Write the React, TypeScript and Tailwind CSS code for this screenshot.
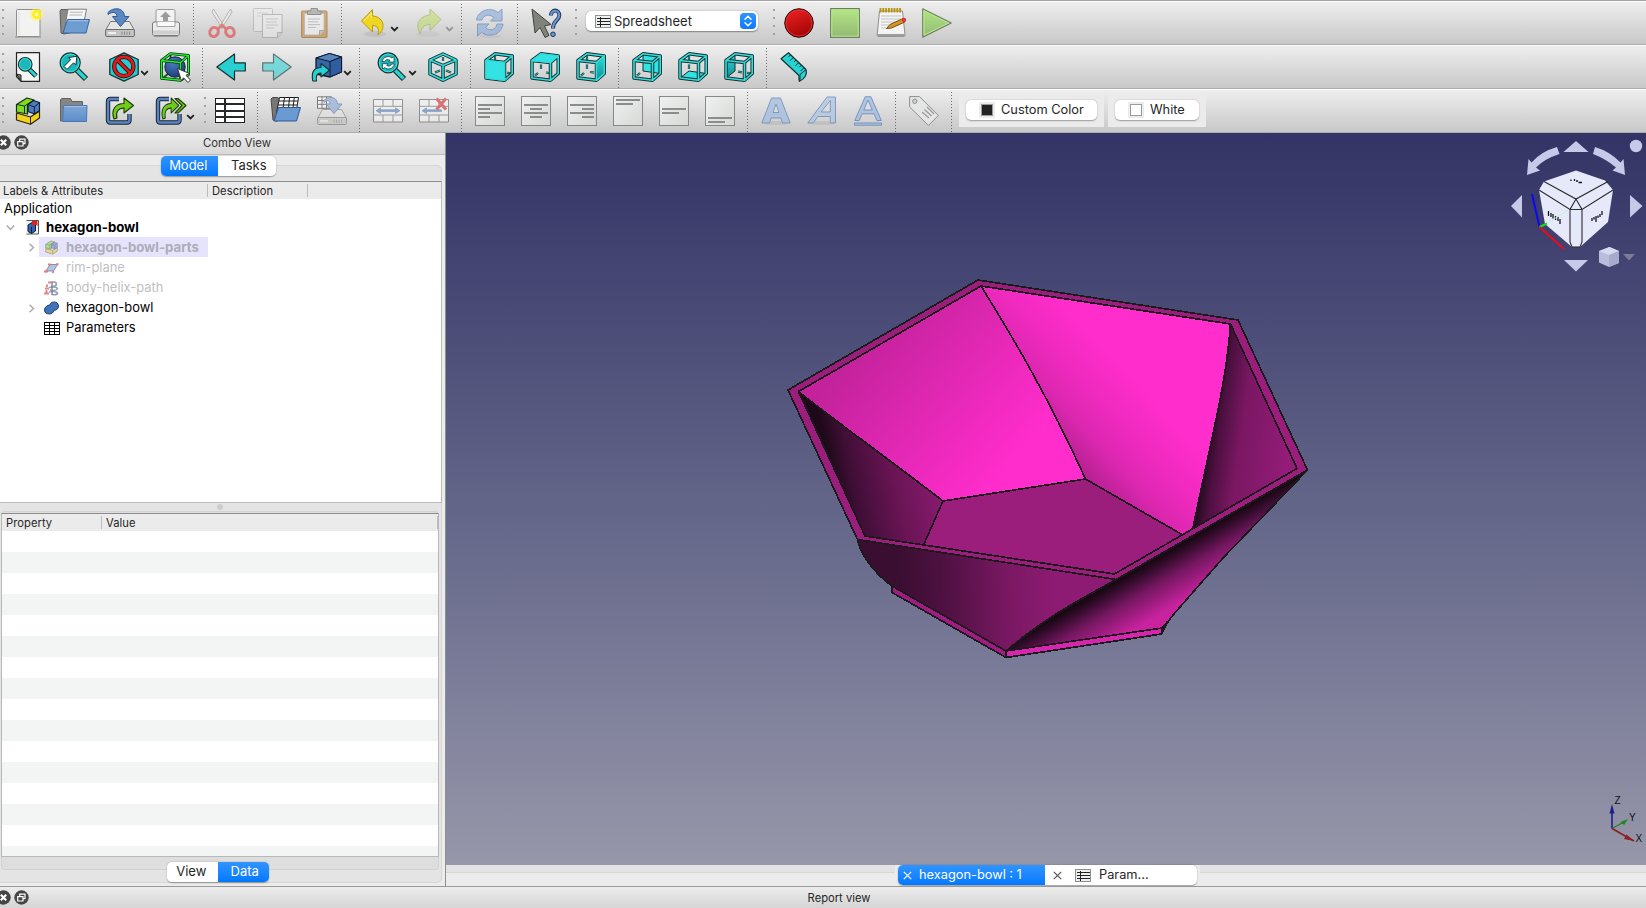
import React from "react";
import type { ReactNode } from "react";

const INK = "#16302f";
const NAVY = "#1c2430";

function Svg({ children, dim, className = "" }: { children: ReactNode; dim?: number; className?: string }) {
  return (
    <svg width="30" height="30" viewBox="0 0 30 30" className={"shrink-0 overflow-visible " + className} opacity={dim ?? 1} strokeLinejoin="round">
      {children}
    </svg>
  );
}

function Chevron({ dim }: { dim?: number }) {
  return (
    <svg width="9" height="6" viewBox="0 0 9 6" className="mt-[18px] shrink-0" opacity={dim ?? 1}>
      <path d="M1.2 1.2 L4.5 4.4 L7.8 1.2" fill="none" stroke="#1e1e1e" strokeWidth="1.8" />
    </svg>
  );
}

function Tool({ children }: { children: ReactNode }) {
  return <div className="flex w-[46px] shrink-0 px-2">{children}</div>;
}

function MenuTool({ children, dim }: { children: ReactNode; dim?: number }) {
  return (
    <div className="flex w-[55px] shrink-0 gap-[1px] pl-3">
      {children}
      <Chevron dim={dim} />
    </div>
  );
}

function Sep() {
  return (
    <div className="flex h-full w-[10px] shrink-0 justify-center pr-[1px]">
      <div className="-mt-[4px] h-[40px] w-px bg-[repeating-linear-gradient(to_bottom,#6c6c6c_0px,#6c6c6c_1px,transparent_1px,transparent_3px)]" />
    </div>
  );
}

function Handle({ className }: { className: string }) {
  return (
    <div className={"flex shrink-0 flex-col items-end gap-[6px] pt-[1px] pr-[1px] " + className}>
      <i className="h-[2px] w-[2px] bg-[#a2a2a2]" />
      <i className="h-[2px] w-[2px] bg-[#a2a2a2]" />
      <i className="h-[2px] w-[2px] bg-[#a2a2a2]" />
      <i className="h-[2px] w-[2px] bg-[#a2a2a2]" />
    </div>
  );
}

function Bar({ children }: { children: ReactNode }) {
  return (
    <div className="flex h-[44px] shrink-0 items-start border-t border-b border-t-white border-b-[#adadad] bg-linear-to-b from-[#eeeeee] to-[#c8c8c8] pt-[6px]">
      {children}
    </div>
  );
}

/* ---------- file and edit icons ---------- */

const NewIcon = () => (
  <Svg>
    <path d="M2 29 H28" stroke="#999" strokeWidth="1.2" />
    <rect x="3.5" y="1.5" width="23.5" height="27" rx="1" fill="#f2f2f1" stroke="#8d8d8b" />
    <path d="M6 4 V27" stroke="#dcdcdc" />
    <circle cx="23.5" cy="6.5" r="6.6" fill="#fff65a" opacity=".55" />
    <circle cx="23.5" cy="6.5" r="4.4" fill="#ffee1c" />
    <circle cx="23.5" cy="6.5" r="1.8" fill="#fffbc0" />
  </Svg>
);
const FolderIcon = () => (
  <Svg>
    <path d="M2 25 L1 3 L2 1.5 H10 L11 4 H24 V22 L5 26 Z" fill="#8a8a88" stroke="#5c5c5a" />
    <path d="M6 18 L9 1.2 H27.5 L25 14 Z" fill="#f6f6f6" stroke="#7d7d7d" />
    <path d="M11 4.2 H24 M10.5 7 H23" stroke="#b5b5b5" />
    <path d="M8.5 11.5 H30.5 L27 25 H4 Z" fill="#6e9dd2" stroke="#3565a3" />
    <path d="M9.5 12.7 H29" stroke="#a6c5e8" />
  </Svg>
);
const DriveBase = () => (
  <>
    <path d="M5.5 13.5 H24.5 L29.5 22.5 H.5 Z" fill="#e6e6e4" stroke="#777" />
    <rect x=".6" y="21.5" width="28.8" height="7" rx="1.2" fill="#c4c4c2" stroke="#6c6c6a" />
    <path d="M3 25 H11" stroke="#eee" strokeWidth="2" />
    <path d="M17 23.5 V27 M19.5 23.5 V27 M22 23.5 V27 M24.5 23.5 V27" stroke="#8b8b8b" />
  </>
);
const SaveArrow = () => (
  <path d="M3 4.5 C8 -1 19 -1 19.5 8.5 H24 L15.5 18.5 L7.5 8.5 H12 C12 4.5 8 2.8 3 6.5 Z" fill="#5b88c0" stroke="#2f5a98" />
);
const SaveIcon = () => (
  <Svg>
    <DriveBase />
    <SaveArrow />
  </Svg>
);
const PrintIcon = () => (
  <Svg>
    <path d="M5 16 V3 Q5 1.5 6.5 1.5 H22.5 Q24 1.5 24 3 V16" fill="#f3f3f3" stroke="#9a9a9a" />
    <path d="M14.5 3.5 L20 9 H17 V13 H12 V9 H9 Z" fill="#9c9c9c" />
    <rect x="1.5" y="14" width="27" height="13.5" rx="2" fill="#ececec" stroke="#7c7c7c" />
    <path d="M6 14 V18.5 H24 V14" fill="#fafafa" stroke="#a5a5a5" />
    <path d="M2 22.5 H28 V26.5 H2 Z" fill="#cfcfcf" />
    <path d="M3 28.5 H27" stroke="#9b9b9b" />
  </Svg>
);
const CutIcon = () => (
  <Svg dim={0.62}>
    <path d="M6.5 1 L17.5 19 L15 20 L5 4 Z M23.5 1 L12.5 19 L15 20 L25 4 Z" fill="#f0f0ef" stroke="#8e8e8c" strokeWidth=".9" />
    <ellipse cx="7" cy="24" rx="4.2" ry="4.6" fill="none" stroke="#e04545" strokeWidth="3" transform="rotate(30 7 24)" />
    <ellipse cx="23" cy="24" rx="4.2" ry="4.6" fill="none" stroke="#e04545" strokeWidth="3" transform="rotate(-30 23 24)" />
    <path d="M11 21 L15 17 L19 21" fill="none" stroke="#e04545" strokeWidth="2.5" />
  </Svg>
);
const CopyIcon = () => (
  <Svg dim={0.45}>
    <rect x=".5" y=".5" width="19" height="23" rx="1" fill="#eee" stroke="#999" />
    <path d="M4 5 H15 M4 8 H15" stroke="#bbb" />
    <path d="M9.5 6.5 H29 V25 L25 29.5 H9.5 Z" fill="#f4f4f4" stroke="#888" />
    <path d="M13 11 H25 M13 14 H24 M13 17 H25 M13 20 H21" stroke="#aaa" />
    <path d="M29 24.5 H24.5 V29" fill="#ccc" stroke="#888" />
  </Svg>
);
const PasteIcon = () => (
  <Svg dim={0.62}>
    <rect x="2.5" y="3" width="25.5" height="26.5" rx="1" fill="#c58a3a" stroke="#8f6224" />
    <path d="M5.5 5.5 H25 V23 L20.5 27 H5.5 Z" fill="#f4f4f3" stroke="#a99" strokeWidth=".7" />
    <path d="M9 11 H21 M9 13.8 H19 M9 16.6 H21 M9 19.4 H17" stroke="#aaa" />
    <path d="M25 22.5 H20.5 V27" fill="#bbb" stroke="#888" />
    <path d="M8.5 6.5 V3 H12 V.5 H18.5 V3 H22 V6.5 Z" fill="#9d9d9a" stroke="#5f5f5c" />
  </Svg>
);
const UndoIcon = () => (
  <Svg>
    <ellipse cx="16" cy="26" rx="11" ry="3" fill="#999" opacity=".28" />
    <path d="M2.5 13 L13.5 1.5 V8 C23.5 8.5 28.5 19 19 27 C20.5 20.5 18.5 17.5 13.5 17.5 V24 Z" fill="#efd623" stroke="#bd9a07" />
    <path d="M5 13 L12.3 5 V9.5" fill="none" stroke="#fbf095" />
  </Svg>
);
const RedoIcon = () => (
  <Svg dim={0.42}>
    <ellipse cx="14" cy="26" rx="11" ry="3" fill="#999" opacity=".3" />
    <path d="M27 11.5 L16 1 V7 C5 8 .5 17 6.5 26 C7 20 10 16.5 16 16.5 V22.5 Z" fill="#b5dc40" stroke="#769a17" />
  </Svg>
);
const RefreshIcon = () => (
  <Svg dim={0.6}>
    <ellipse cx="15" cy="28" rx="11" ry="2" fill="#999" opacity=".3" />
    <path d="M1.5 12 C3 2 16 -1.5 23 4.5 L27 1 V13 H15.5 L19 9.5 C14 5.5 8.5 7 7 12 Z" fill="#86aadc" stroke="#4f78b3" />
    <path d="M28 16 C26.5 27 13.5 30 6.5 24.5 L2.5 28 V16 H14 L10.5 19.5 C15 23.5 21 22 22 16 Z" fill="#86aadc" stroke="#4f78b3" />
  </Svg>
);
const WhatsThisIcon = () => (
  <Svg>
    <path d="M1 1 L4 25 L9 19.5 L14 29.5 L18 27.5 L13.5 18 L20 16.5 Z" fill="#7f837c" stroke="#40443e" />
    <path d="M20 7.5 C20 .8 28.300 1 28.300 7.5 C28.300 12.5 22 12 22 20.5" fill="none" stroke="#203a5e" strokeWidth="4" />
    <path d="M20.200 7.2 C20 1.3 28.200 1.2 28.200 7.5 C28.200 12.3 22 12 22 20" fill="none" stroke="#6b95cc" strokeWidth="2.2" />
    <circle cx="22" cy="26.3" r="2.3" fill="#6b95cc" stroke="#203a5e" />
  </Svg>
);
const RecordIcon = () => (
  <Svg>
    <circle cx="15" cy="15" r="14.3" fill="url(#rec)" stroke="#1d0d0d" />
    <circle cx="15" cy="15" r="13" fill="none" stroke="#ee3838" strokeWidth=".7" />
  </Svg>
);
const StopIcon = () => (
  <Svg>
    <rect x=".6" y=".6" width="28.8" height="28.8" fill="url(#grn)" stroke="#707b68" strokeWidth="1.1" />
    <rect x="1.8" y="1.8" width="26.4" height="26.4" fill="none" stroke="#b2ec84" />
  </Svg>
);
const EditMacroIcon = () => (
  <Svg>
    <path d="M3.5 3 H26.5 L29 27 Q29 28.5 27 28.5 H3 Q1 28.5 1.2 27 Z" fill="#f4f4f4" stroke="#8e8e8c" />
    <path d="M1.5 26 H28.5 V28.5 H1.5 Z" fill="#9d9d9b" />
    <path d="M5 8 H25 M5 11 H25 M5 14 H20 M5 17 H23 M5 20 H14" stroke="#c3c3c3" />
    <path d="M4.5 0 V4.5 M7.3 0 V4.5 M10.1 0 V4.5 M12.9 0 V4.5 M15.7 0 V4.5 M18.5 0 V4.5 M21.3 0 V4.5 M24.1 0 V4.5" stroke="#b5930c" strokeWidth="1.8" />
    <path d="M10.5 20.5 L14 16.5 L27 10.5 L28.8 14 L15.5 20 Z" fill="#d79426" stroke="#7b4f0d" />
    <circle cx="28" cy="12" r="2.2" fill="#e63333" />
  </Svg>
);
const PlayIcon = () => (
  <Svg>
    <path d="M.7 .7 L29.3 15 L.7 29.3 Z" fill="url(#grn)" stroke="#707b68" strokeWidth="1.1" />
    <path d="M2 2.8 L26.6 15 L2 27.2 Z" fill="none" stroke="#b2ec84" />
  </Svg>
);

/* ---------- view icons ---------- */

const Lens = () => (
  <>
    <path d="M18 18 L27 27" stroke={INK} strokeWidth="6" />
    <path d="M18 18 L26.5 26.5" stroke="#2bd3d3" strokeWidth="3.6" />
    <circle cx="11.2" cy="10.8" r="10" fill="#1cb7bb" stroke={INK} strokeWidth="1.2" />
    <circle cx="11.2" cy="10.8" r="8.8" fill="none" stroke="#3be2e2" strokeWidth="1" />
  </>
);
const FitAllIcon = () => (
  <Svg>
    <path d="M3.5 .6 H26.5 V29.4 H8 L3.5 24.5 Z" fill="#f4f4f3" stroke="#262626" strokeWidth="1.2" />
    <path d="M3.5 22 L8 23 V29 Z" fill="#777" stroke="#262626" />
    <path d="M16 17 L23 24" stroke={INK} strokeWidth="5" />
    <path d="M16 17 L22.8 23.8" stroke="#2bd3d3" strokeWidth="2.8" />
    <circle cx="12.2" cy="12.3" r="6.8" fill="#1fb6ba" stroke={INK} strokeWidth="1.2" />
    <circle cx="12.2" cy="12.3" r="5.7" fill="none" stroke="#3be2e2" />
  </Svg>
);
const FitSelIcon = () => (
  <Svg>
    <Lens />
    <path d="M18 4.2 L16.8 13 L14.6 10.8 L8 17.4 L5 14.4 L11.6 7.8 L9.4 5.6 Z" fill="#fff" stroke={INK} />
  </Svg>
);
const DrawStyleIcon = () => (
  <Svg>
    <path d="M15 .8 L29.2 7.5 V22.5 L15 29.2 L.8 22.5 V7.5 Z" fill="#1fcfd1" stroke={INK} strokeWidth="1.3" />
    <circle cx="14.8" cy="14.5" r="9.6" fill="none" stroke="#3a0505" strokeWidth="4.2" />
    <path d="M8 7.7 L21.6 21.3" stroke="#3a0505" strokeWidth="4.2" />
    <circle cx="14.8" cy="14.5" r="9.6" fill="none" stroke="#e01b1b" strokeWidth="2.6" />
    <path d="M8 7.7 L21.6 21.3" stroke="#e01b1b" strokeWidth="2.6" />
  </Svg>
);
const BOX_EDGES = "M1.5 8.5 L10.5 1.6 L28.5 3.5 V22.5 L20.5 28.3 L1.5 26.2 Z M1.5 8.5 L20.5 10.5 L28.5 3.5 M20.5 10.5 V28.3";
const BoundBoxIcon = () => (
  <Svg>
    <path d="M10.5 2 V20 M10.5 20 L1.5 27 M10.5 20 L28.5 22" stroke="#0e5a14" strokeWidth="2" />
    <circle cx="15" cy="15" r="10.2" fill="url(#ball)" stroke="#14233c" />
    <path d={BOX_EDGES} fill="none" stroke="#0c3310" strokeWidth="2.9" />
    <path d={BOX_EDGES} fill="none" stroke="#1df02c" strokeWidth="1.4" />
    <path d="M17.5 16.5 L29.5 21.5 L26 23.3 L30.5 28 L28 30.5 L23.5 25.8 L21.5 29 Z" fill="#fff" stroke="#333" />
  </Svg>
);
const ARROW = "M.8 15 L18.5 2 V10.8 H29.3 V19 H18.5 V28 Z";
const BackIcon = () => (
  <Svg>
    <path d={ARROW} fill="#28cfd0" stroke={INK} strokeWidth="1.2" />
  </Svg>
);
const ForwardIcon = () => (
  <Svg dim={0.6}>
    <path d={ARROW} fill="#33d6d6" stroke={INK} strokeWidth="1.2" transform="matrix(-1 0 0 1 30 0)" />
  </Svg>
);
const LinkViewIcon = () => (
  <Svg>
    <path d="M4 6 L17.5 1.5 L29.5 5 V20 L18 25 L4 22 Z" fill="#3566a8" stroke="#101c30" strokeWidth="1.3" />
    <path d="M4 6 L18 9.5 L29.5 5 L17.5 1.5 Z" fill="#5783bf" stroke="#101c30" />
    <path d="M18 9.5 V25 L29.5 20 V5 Z" fill="#2f5d9f" stroke="#101c30" />
    <path d="M.8 29 C-1 20 2 15.5 9 15.5 V11.5 L17.5 18.3 L9 25 V21 C5 21 3.5 24 4.5 29 Z" fill="#27d0d2" stroke={INK} strokeWidth="1.1" />
  </Svg>
);
const ZoomSyncIcon = () => (
  <Svg>
    <Lens />
    <path d="M5 9.5 C6 4.5 12 3.5 15 6 L17 4.5 V10 H11.5 L13 8.3 C11 7 8.5 7.3 7.8 9.5 Z M17.3 12 C16.5 17 10.5 18 7.5 15.6 L5.5 17 V11.7 H11 L9.5 13.3 C11.5 14.8 14 14.2 14.6 12 Z" fill="#fff" stroke={INK} strokeWidth=".7" />
  </Svg>
);
function Tube({ d, thin }: { d: string; thin?: boolean }) {
  return (
    <>
      <path d={d} fill="none" stroke={INK} strokeWidth={thin ? 2.2 : 3.5} />
      <path d={d} fill="none" stroke="#2fdede" strokeWidth={thin ? 0.8 : 1.6} />
    </>
  );
}
const IsoIcon = () => (
  <Svg>
    <Tube thin d="M15 5 V9 M7 20.5 L12 18.5 M23 20.5 L18 18.5" />
    <Tube d="M15 2 L28 8 V22 L15 28.2 L2 22 V8 Z M2 8 L15 13.5 L28 8 M15 13.5 V28" />
  </Svg>
);
type Face = "front" | "top" | "right" | "rear" | "bottom" | "left";
const facePath: Record<Face, string> = {
  front: "M2 8.5 L20.5 10.5 V28.3 L2 26 Z",
  top: "M2 8.5 L20.5 10.5 L28.2 4 L11 1.8 Z",
  right: "M20.5 10.5 L28.2 4 V21.5 L20.5 28.3 Z",
  rear: "M11 2 L28.2 4 V21.5 L11 19 Z",
  bottom: "M2 26 L11 19 L28.2 21.5 L20.5 28.3 Z",
  left: "M2 8.5 L11 2 V19 L2 26 Z",
};
const stubPath: Record<Face, string> = {
  front: "M11 3 V8 M23 20.8 L27 21.3",
  top: "M11 12.5 V17 M5 23.5 L8 21 M16 20.5 L21 21.3",
  right: "M11 4 V8 M11 12.5 V17 M5 23.5 L8 21 M14 20 L18 20.6",
  rear: "M5 23.5 L8 21",
  bottom: "M11 4 V8 M11 12.5 V17",
  left: "M14 19.6 L18 20.3 M23 20.8 L27 21.3",
};
function CubeIcon({ face }: { face: Face }) {
  const near = face === "front" || face === "top" || face === "right";
  const fill = face === "right" || face === "left" ? "url(#teal)" : "#33e3e3";
  return (
    <Svg>
      {!near && <path d={facePath[face]} fill={fill} stroke={INK} />}
      <Tube thin d={stubPath[face]} />
      <Tube d="M2 8.5 L11 1.8 L28.2 4 V21.5 L20.5 28.3 L2 26 Z M2 8.5 L20.5 10.5 L28.2 4 M20.5 10.5 V28.3" />
      {near && <path d={facePath[face]} fill={fill} stroke="#2fdcdc" strokeWidth="1.3" />}
    </Svg>
  );
}
const MeasureIcon = () => (
  <Svg>
    <path d="M8.5 .8 L26 17.5 C27 21 26 26 19.5 29.3 C18 27 20 25 18.5 23 L1 6.8 Z" fill="#25d3d5" stroke={INK} strokeWidth="1.2" />
    <path d="M26 17.5 L20 22.5 V29" fill="none" stroke={INK} />
    <path d="M10.6 2.8 L8.6 4.8 M13.3 5.4 L10 8.7 M16 8 L14 10 M18.7 10.6 L15.4 13.9 M21.4 13.2 L19.4 15.2 M24 15.7 L20.7 19" stroke={INK} strokeWidth="1" />
  </Svg>
);

/* ---------- workbench icons ---------- */

const BodyIcon = ({ small }: { small?: boolean }) => (
  <svg width={small ? 15 : 30} height={small ? 15 : 30} viewBox="0 0 30 30" className="shrink-0" strokeLinejoin="round" opacity={small ? 0.5 : 1}>
    <path d="M3.5 17 L17.5 21 L26.5 15 V22 L17.5 28.3 L3.5 24 Z" fill="#f2d21b" stroke="#2b2405" strokeWidth="1.2" />
    <path d="M17.5 21 V28" stroke="#2b2405" />
    <path d="M3.5 8.5 L14 2 L21 4 L14.5 9.5 V18 L3.5 16 Z" fill="#7edc1e" stroke="#17300a" strokeWidth="1.2" />
    <path d="M3.5 8.5 L11.5 10 L21 4 M11.5 10 V17" fill="none" stroke="#17300a" />
    <path d="M15 8.5 L20.5 4.5 L26.5 6.5 V14.5 L21.5 18 L15 15.5 Z" fill="#4b7cc0" stroke="#101c30" strokeWidth="1.2" />
    <path d="M15 8.5 L21.3 11 L26.5 6.5 M21.3 11 V18" fill="none" stroke="#101c30" />
  </svg>
);
const GroupIcon = () => (
  <Svg>
    <path d="M1.5 25 V3.5 L3 2.5 H11.5 L13 5.5 H23.5 V22 Z" fill="#858583" stroke="#626260" />
    <path d="M4.5 9.5 H28 L27.5 25.5 H3.5 Z" fill="url(#fold)" stroke="#4a78b4" />
    <path d="M5.5 10.6 H27" stroke="#a3c2e6" />
  </Svg>
);
const SQUARE = "M14 3 H5.5 Q3 3 3 5.5 V24 Q3 26.5 5.5 26.5 H22 Q24.5 26.5 24.5 24 V18";
const Box = () => (
  <>
    <path d={SQUARE} fill="none" stroke={NAVY} strokeWidth="4.4" />
    <path d={SQUARE} fill="none" stroke="#5585c4" strokeWidth="2.4" />
  </>
);
const GREEN_ARROW = "M9 23 C5.5 13 11 7.5 19 7.5 V2 L28.5 9.5 L19 17 V12 C13 12 10.5 16 12 22 Z";
const LinkIcon = () => (
  <Svg>
    <Box />
    <path d={GREEN_ARROW} fill="#6fcb1c" stroke="#1c3a08" strokeWidth="1.1" />
  </Svg>
);
const MultiLinkIcon = () => (
  <Svg>
    <Box />
    <path d="M20 2.5 H23 L31 9.5 L23 17 H20 L27 9.5 Z" fill="#6fcb1c" stroke="#1c3a08" strokeWidth="1.1" />
    <path d={GREEN_ARROW} fill="#6fcb1c" stroke="#1c3a08" strokeWidth="1.1" transform="translate(.5 0) scale(.82 1)" />
  </Svg>
);
const SheetIcon = () => (
  <Svg>
    <g shapeRendering="crispEdges">
      <rect x=".5" y="2.5" width="29" height="24" fill="#fff" stroke="#1f1f1f" strokeWidth="1" />
      <path d="M0 8.3 H30 M0 14.5 H30 M0 20.5 H30 M10.2 2 V27" stroke="#262a2c" strokeWidth="2" />
    </g>
  </Svg>
);
const ImportIcon = () => (
  <Svg>
    <path d="M2 24 L0 3 L1.5 1.5 H7 L9 4 H24 V22 L5 25 Z" fill="#777775" stroke="#4c4c4a" />
    <path d="M5.5 17 L8.5 1.5 H27.5 L25.5 14 Z" fill="#fff" stroke="#1e1e1e" />
    <path d="M8 5 H27 M7 9 H26 M13.5 1.5 L12 12 M18.5 1.5 L17.5 12 M23.3 1.5 L22 12" stroke="#1e1e1e" />
    <path d="M7.5 11.5 H29.5 L25.5 25 H3 Z" fill="#6a9ad2" stroke="#2d5894" />
  </Svg>
);
const ExportIcon = () => (
  <Svg dim={0.55}>
    <rect x=".5" y=".8" width="14" height="11.5" fill="#fff" stroke="#222" />
    <path d="M.5 4.5 H14 M.5 8.3 H14 M5 .8 V12 M9.5 .8 V12" stroke="#222" />
    <DriveBase />
    <path d="M7 4.5 C11 0 20 0 20.5 8 H25 L17 17.5 L9 8 H13 C13 5 11 3 7 6.5 Z" fill="#7ea1d6" stroke="#3e67a6" />
  </Svg>
);
const MergeGrid = () => (
  <>
    <rect x=".5" y="3.5" width="29" height="22.5" fill="#f6f6f6" stroke="#666" />
    <path d="M0 10.3 H30 M0 19 H30 M10 3.5 V10 M20 3.5 V10 M10 19 V26 M20 19 V26" stroke="#777" />
  </>
);
const MergeIcon = () => (
  <Svg dim={0.65}>
    <MergeGrid />
    <path d="M3 14.7 L7.5 11.8 V13.8 H22.5 V11.8 L27 14.7 L22.5 17.5 V15.6 H7.5 V17.5 Z" fill="#5e8cc8" stroke="#3f6ba8" strokeWidth=".6" />
  </Svg>
);
const SplitIcon = () => (
  <Svg dim={0.65}>
    <MergeGrid />
    <path d="M3 14.7 L7.5 11.8 V13.8 H22.5 V15.6 H7.5 V17.5 Z" fill="#5e8cc8" stroke="#3f6ba8" strokeWidth=".6" />
    <path d="M17.5 2.5 L27 13.500 M27 2.5 L17.5 13.500" stroke="#d63a3a" strokeWidth="3.2" />
  </Svg>
);
function AlignIcon({ d }: { d: string }) {
  return (
    <Svg>
      <rect x=".5" y=".5" width="29" height="29" fill="url(#paper)" stroke="#858988" shapeRendering="crispEdges" />
      <path d={d} stroke="#8a8d8c" strokeWidth="2" shapeRendering="crispEdges" />
    </Svg>
  );
}
const BoldIcon = () => (
  <Svg dim={0.75}>
    <ellipse cx="15" cy="27" rx="13" ry="2" fill="#aaa" opacity=".5" />
    <path d="M.8 27 L10.5 2 H19.5 L29.2 27 H21.5 L19.8 22 H10.2 L8.5 27 Z M12 16.5 H18 L15 8 Z" fill="#a4bde0" stroke="#5f84b8" fillRule="evenodd" />
  </Svg>
);
const ItalicIcon = () => (
  <Svg dim={0.75}>
    <ellipse cx="15" cy="27" rx="13" ry="2" fill="#aaa" opacity=".5" />
    <path d="M.8 27 L20 1 H28.5 V27 H23.3 V20.5 H10.8 L6.2 27 Z M14 16 H23.3 V4.5 Z" fill="#b0c6e4" stroke="#5f84b8" fillRule="evenodd" />
  </Svg>
);
const UnderlineIcon = () => (
  <Svg dim={0.8}>
    <path d="M1.800 24.500 L12.200 .7 H17.900 L28.300 24.500 H23.900 L21 17.800 H9.100 L6.200 24.500 Z M10.800 14 H19.300 L15 4.100 Z" fill="#a4bde0" stroke="#5f84b8" fillRule="evenodd" />
    <rect x="1.5" y="27" width="27" height="2.2" fill="#a9c1e2" stroke="#5f84b8" />
  </Svg>
);
const TagIcon = () => (
  <Svg>
    <path d="M.6 .6 H10.5 L29.4 19.5 L19.5 29.4 L.6 11 Z" fill="#e4e5e4" stroke="#8d9090" />
    <circle cx="5.8" cy="5.3" r="2.2" fill="#cfcfcf" stroke="#8d9090" />
    <path d="M13 16 L20 22 M15.500 13.5 L22.500 20 M18 11 L25 18" stroke="#979a9a" strokeWidth="1.2" fill="none" />
  </Svg>
);

function SmallSheet({ black }: { black?: boolean }) {
  return black ? (
    <svg width="16" height="13" viewBox="0 0 16 13" className="shrink-0" shapeRendering="crispEdges">
      <path d="M.5 .5 H15.5 V12.5 H.5 Z M.5 3.5 H15.5 M.5 6.5 H15.5 M.5 9.5 H15.5 M5.5 .5 V12.5 M10.5 .5 V12.5" fill="#fff" stroke="#000" />
    </svg>
  ) : (
    <svg width="16" height="13" viewBox="0 0 16 13" className="shrink-0" shapeRendering="crispEdges">
      <path d="M.5 .5 H15.5 V12.5 H.5 Z" fill="#eef0ef" stroke="#8c9190" />
      <path d="M1.5 3.5 H14.5 M1.5 6.5 H14.5 M1.5 9.5 H14.5 M5.5 1.5 V11.5" stroke="#222" />
    </svg>
  );
}

function Defs() {
  return (
    <svg width="0" height="0" className="absolute">
      <defs>
        <linearGradient id="rec" x1="0" y1="0" x2=".4" y2="1"><stop stopColor="#f02424" /><stop offset="1" stopColor="#a80606" /></linearGradient>
        <linearGradient id="grn" x1="0" y1="0" x2="0" y2="1"><stop stopColor="#b4e687" /><stop offset="1" stopColor="#93b873" /></linearGradient>
        <linearGradient id="teal" x1="0" y1="0" x2="0" y2="1"><stop stopColor="#2fdada" /><stop offset="1" stopColor="#0f8d92" /></linearGradient>
        <linearGradient id="fold" x1="0" y1="0" x2="0" y2="1"><stop stopColor="#7fa8d8" /><stop offset="1" stopColor="#5b8cca" /></linearGradient>
        <linearGradient id="paper" x1="0" y1="0" x2="1" y2="1"><stop stopColor="#f0f1f0" /><stop offset="1" stopColor="#d6d8d6" /></linearGradient>
        <radialGradient id="ball" cx=".4" cy=".3" r=".8"><stop stopColor="#4c7fc6" /><stop offset="1" stopColor="#17366c" /></radialGradient>
      </defs>
    </svg>
  );
}

function ColorButton({ label, swatch, className }: { label: string; swatch: string; className: string }) {
  return (
    <div className={"-mt-[2px] flex h-[33px] shrink-0 justify-center bg-[#ebebeb] pt-[6px] " + className}>
      <div className="flex h-[20px] w-full items-center rounded-[5px] bg-white pl-[13px] shadow-[0_0.5px_1.5px_rgba(0,0,0,0.35)]">
        <span className="mr-[6px] flex h-[16px] w-[16px] items-center justify-center bg-[#ececec]">
          <i className={"h-[12px] w-[12px] border border-[#9b9b9b] " + swatch} />
        </span>
        <span className="text-[12.8px] leading-none whitespace-nowrap text-[#262626]">{label}</span>
      </div>
    </div>
  );
}

function Toolbars() {
  return (
    <div className="flex shrink-0 flex-col border-t border-[#a3a3a3]">
      <Bar>
        <Handle className="w-[5px]" />
        <Tool><NewIcon /></Tool>
        <Tool><FolderIcon /></Tool>
        <Tool><SaveIcon /></Tool>
        <Tool><PrintIcon /></Tool>
        <Sep />
        <Tool><CutIcon /></Tool>
        <Tool><CopyIcon /></Tool>
        <Tool><PasteIcon /></Tool>
        <Sep />
        <MenuTool><UndoIcon /></MenuTool>
        <MenuTool dim={0.35}><RedoIcon /></MenuTool>
        <Sep />
        <Tool><RefreshIcon /></Tool>
        <Sep />
        <Tool><WhatsThisIcon /></Tool>
        <Handle className="w-[9px]" />
        <div className="mt-[3px] ml-[8px] flex h-[20px] w-[172px] shrink-0 items-center rounded-[5px] bg-white pr-[2px] pl-[9px] shadow-[0_0.5px_1.5px_rgba(0,0,0,0.4)]">
          <SmallSheet />
          <span className="ml-[3px] flex-1 text-[13px] leading-none text-[#262626]">Spreadsheet</span>
          <span className="flex h-[16px] w-[16px] items-center justify-center rounded-[4px] bg-linear-to-b from-[#2f94ff] to-[#0a7aff]">
            <svg width="8" height="12" viewBox="0 0 8 12"><path d="M1 4.3 L4 1.3 L7 4.3 M1 7.7 L4 10.7 L7 7.7" fill="none" stroke="#fff" strokeWidth="1.5" strokeLinecap="round" strokeLinejoin="round" /></svg>
          </span>
        </div>
        <Handle className="w-[18px]" />
        <Tool><RecordIcon /></Tool>
        <Tool><StopIcon /></Tool>
        <Tool><EditMacroIcon /></Tool>
        <Tool><PlayIcon /></Tool>
      </Bar>
      <Bar>
        <Handle className="w-[5px]" />
        <Tool><FitAllIcon /></Tool>
        <Tool><FitSelIcon /></Tool>
        <MenuTool><DrawStyleIcon /></MenuTool>
        <Tool><BoundBoxIcon /></Tool>
        <Sep />
        <Tool><BackIcon /></Tool>
        <Tool><ForwardIcon /></Tool>
        <MenuTool><LinkViewIcon /></MenuTool>
        <Sep />
        <MenuTool><ZoomSyncIcon /></MenuTool>
        <Tool><IsoIcon /></Tool>
        <Sep />
        <Tool><CubeIcon face="front" /></Tool>
        <Tool><CubeIcon face="top" /></Tool>
        <Tool><CubeIcon face="right" /></Tool>
        <Sep />
        <Tool><CubeIcon face="rear" /></Tool>
        <Tool><CubeIcon face="bottom" /></Tool>
        <Tool><CubeIcon face="left" /></Tool>
        <Sep />
        <Tool><MeasureIcon /></Tool>
      </Bar>
      <Bar>
        <Handle className="w-[5px]" />
        <Tool><BodyIcon /></Tool>
        <Tool><GroupIcon /></Tool>
        <Tool><LinkIcon /></Tool>
        <MenuTool><MultiLinkIcon /></MenuTool>
        <Handle className="w-[9px]" />
        <Tool><SheetIcon /></Tool>
        <Sep />
        <Tool><ImportIcon /></Tool>
        <Tool><ExportIcon /></Tool>
        <Sep />
        <Tool><MergeIcon /></Tool>
        <Tool><SplitIcon /></Tool>
        <Sep />
        <Tool><AlignIcon d="M3 9 H27 M3 13 H15 M3 17 H27 M3 21 H15" /></Tool>
        <Tool><AlignIcon d="M3 9 H27 M9 13 H21 M3 17 H27 M9 21 H21" /></Tool>
        <Tool><AlignIcon d="M3 9 H27 M15 13 H27 M3 17 H27 M15 21 H27" /></Tool>
        <Tool><AlignIcon d="M3 4 H27 M3 8 H20" /></Tool>
        <Tool><AlignIcon d="M3 13 H27 M3 17 H20" /></Tool>
        <Tool><AlignIcon d="M3 22 H27 M3 26 H20" /></Tool>
        <Sep />
        <Tool><BoldIcon /></Tool>
        <Tool><ItalicIcon /></Tool>
        <Tool><UnderlineIcon /></Tool>
        <Sep />
        <Tool><TagIcon /></Tool>
        <Sep />
        <ColorButton label="Custom Color" swatch="bg-[#222222]" className="ml-[2px] w-[145px] px-[7px]" />
        <ColorButton label="White" swatch="bg-white" className="ml-[4px] w-[98px] px-[7px]" />
      </Bar>
    </div>
  );
}

function DockButtons() {
  return (
    <div className="-ml-[4px] flex w-[33px] shrink-0 gap-[3px]">
      <svg width="15" height="15" viewBox="0 0 15 15"><circle cx="7.5" cy="7.5" r="7.2" fill="#454545" /><path d="M4.8 4.8 L10.2 10.2 M10.2 4.8 L4.8 10.2" stroke="#fff" strokeWidth="2.2" /></svg>
      <svg width="15" height="15" viewBox="0 0 15 15"><circle cx="7.5" cy="7.5" r="7.2" fill="#454545" /><path d="M5.7 6.2 V4.2 H11 V8.6 H9.3 M3.7 6.6 H9 V11 H3.7 Z" fill="none" stroke="#fff" strokeWidth="1.2" /></svg>
    </div>
  );
}

/* ---------- side panel ---------- */

function TreeArrow({ open }: { open?: boolean }) {
  return (
    <svg width="9" height="9" viewBox="0 0 9 9" className="shrink-0">
      <path d={open ? "M.8 2.5 L4.5 6.5 L8.2 2.5" : "M2.5 .8 L6.5 4.5 L2.5 8.2"} fill="none" stroke="#a6a6a6" strokeWidth="1.3" />
    </svg>
  );
}
const DocIcon = () => (
  <svg width="14" height="15" viewBox="0 0 14 15" className="shrink-0">
    <path d="M.5 .5 H12.5 V14 H.5" fill="#f2f2f2" stroke="#555" />
    <path d="M2 5 L6 2.5 L9.5 4.5 V11 L5.5 13.5 L2 11.5 Z" fill="#2f66ae" stroke="#0f1f3a" />
    <path d="M5.5 7 V13" stroke="#0f1f3a" />
    <path d="M6 1 L11.5 .5 V6 L9.8 4.5 L7.5 6 L6 4.5 Z" fill="#e02020" />
  </svg>
);
const PlaneIcon = () => (
  <svg width="15" height="12" viewBox="0 0 15 12" className="shrink-0" opacity=".7">
    <path d="M2 9 L6 2.500 H13.500 L9.500 9 Z" fill="#8eb0d8" stroke="#4a6286" />
    <path d="M4 2.500 H7 M12 2.500 L14.500 2 M1 10.500 L3 8 M0 9.500 H4 M9.500 9 L8.500 11" stroke="#d84a4a" strokeWidth="1.8" />
  </svg>
);
const HelixIcon = () => (
  <svg width="15" height="15" viewBox="0 0 15 15" className="shrink-0" opacity=".65">
    <path d="M7 1.500 Q12 0 12.500 3 Q12 6 7 5 M5 6.500 Q12 5 13.500 7.500 Q12 10.500 6 9 M5 11 Q12 9.500 13.500 12 Q13 14.500 8 13.500" fill="none" stroke="#5a6f90" strokeWidth="1.6" />
    <path d="M8 .5 V14" stroke="#3d4656" strokeWidth="1.4" />
    <path d="M4 1.500 H7 M3 3.500 V6 M1 7.500 H5 M2.500 9 V12 M0 12.500 H5" stroke="#d84a4a" strokeWidth="2" />
  </svg>
);
const FusionIcon = () => (
  <svg width="15" height="14" viewBox="0 0 15 14" className="shrink-0">
    <path d="M6 4 C6 0 14.5 -.5 14.5 5 C14.5 8 12 9.5 10 9.3 C9.5 14 .5 14.500 .5 9 C.5 6 3.500 4 6 4 Z" fill="#3f72b6" stroke="#1f4277" />
  </svg>
);

function Segments({ left, right, active, shift, className }: { left: string; right: string; active: "left" | "right"; shift: string; className: string }) {
  const on = "bg-linear-to-b from-[#2f94ff] to-[#0078ff] text-white";
  const off = "bg-white text-[#262626]";
  return (
    <div className={"z-10 flex h-[20px] shrink-0 overflow-hidden rounded-[5px] text-[13px] leading-[19px] shadow-[0_0.5px_1.5px_rgba(0,0,0,0.35)] " + className}>
      <span className={"flex-1 pr-[2px] text-center " + (active === "left" ? on : off)}>{left}</span>
      <span className={"flex-1 text-center " + shift + " " + (active === "right" ? on : off)}>{right}</span>
    </div>
  );
}

function Tree() {
  return (
    <div className="flex h-[322px] w-[442px] shrink-0 flex-col border-t border-r border-b border-t-[#8c8c8c] border-r-[#bcbcbc] border-b-[#bcbcbc] bg-white text-[12.9px] text-black">
      <div className="flex h-[17px] shrink-0 items-center bg-[#ebebeb] text-[11.2px] tracking-[0.05px] text-[#262626]">
        <span className="h-[13px] w-[208px] border-r border-[#bdbdbd] pl-[3px] leading-[14px]">Labels &amp; Attributes</span>
        <span className="h-[13px] w-[100px] border-r border-[#bdbdbd] pl-[4px] leading-[14px]">Description</span>
      </div>
      <div className="flex h-[19px] shrink-0 items-center pl-[4px]">Application</div>
      <div className="flex h-[19px] shrink-0 items-center pl-[6px] text-[13.2px] font-bold">
        <TreeArrow open />
        <span className="ml-[11px] flex w-[20px]"><DocIcon /></span>
        hexagon-bowl
      </div>
      <div className="flex h-[20px] shrink-0 items-center pl-[27px]">
        <TreeArrow />
        <div className="ml-[3px] flex h-full w-[169px] items-center bg-[#e6e4fc] pt-[1px] pl-[5px] text-[13.2px] font-bold text-[#acacba]">
          <span className="flex w-[22px]"><BodyIcon small /></span>
          hexagon-bowl-parts
        </div>
      </div>
      <div className="flex h-[20px] shrink-0 items-center pt-[2px] pl-[44px] text-[#bfbfbf]">
        <span className="flex w-[22px]"><PlaneIcon /></span>
        rim-plane
      </div>
      <div className="flex h-[20px] shrink-0 items-center pt-[2px] pl-[44px] text-[#bfbfbf]">
        <span className="flex w-[22px]"><HelixIcon /></span>
        body-helix-path
      </div>
      <div className="flex h-[20px] shrink-0 items-center pt-[2px] pl-[27px]">
        <TreeArrow />
        <span className="ml-[8px] flex w-[22px]"><FusionIcon /></span>
        hexagon-bowl
      </div>
      <div className="flex h-[20px] shrink-0 items-center pt-[2px] pl-[44px]">
        <span className="flex w-[22px]"><SmallSheet black /></span>
        Parameters
      </div>
    </div>
  );
}

function Properties() {
  return (
    <div className="ml-[1px] flex h-[359px] w-[438px] shrink-0 flex-col rounded-[4px] border border-[#d2d2d2] bg-[#dedede] pt-[1px]">
      <div className="-mx-px flex h-[344px] shrink-0 flex-col overflow-hidden border border-[#b8b8b8] border-t-[#8c8c8c] bg-white">
        <div className="flex h-[17px] shrink-0 items-center bg-[#ebebeb] text-[11.2px] tracking-[0.05px] text-[#262626]">
          <span className="h-[13px] w-[100px] border-r border-[#bdbdbd] pl-[4px] leading-[14px]">Property</span>
          <span className="h-[13px] flex-1 border-r border-[#bdbdbd] pl-[4px] leading-[14px]">Value</span>
        </div>
        <div className="flex-1 bg-[repeating-linear-gradient(to_bottom,#ffffff_0px,#ffffff_21px,#f3f5f4_21px,#f3f5f4_42px)]" />
      </div>
    </div>
  );
}

function SidePanel() {
  return (
    <div className="flex w-[446px] shrink-0 flex-col border-r border-[#8f8f93] bg-[#ececec]">
      <div className="flex h-[22px] shrink-0 items-start border-b border-[#bdbdbd] bg-linear-to-b from-[#ececec] to-[#d8d8d8] pt-[2px]">
        <DockButtons />
        <span className="flex-1 pt-[1px] text-center text-[11.3px] leading-[15px] text-[#333333]">Combo View</span>
      </div>
      <div className="mt-[10px] flex h-[718px] w-[442px] flex-col rounded-tr-[5px] rounded-br-[5px] border-t border-b border-[#d6d6d6] bg-[#e4e4e4] shadow-[inset_-1px_0_0_#d6d6d6]">
        <Segments left="Model" right="Tasks" active="left" shift="pl-[4px]" className="-mt-[10px] mb-[5px] ml-[161px] w-[115px]" />
        <Tree />
        <div className="flex h-[8px] shrink-0 items-center justify-center pr-[2px]"><i className="h-[6px] w-[6px] rounded-full bg-[#cdcdcd]" /></div>
        <Properties />
        <Segments left="View" right="Data" active="right" shift="pl-[3px]" className="-mt-[8px] ml-[167px] w-[102px]" />
      </div>
    </div>
  );
}

/* ---------- 3D view ---------- */

function Bowl() {
  return (
    <g>
      <defs>
        <linearGradient id="b1" gradientUnits="userSpaceOnUse" x1="838" y1="374" x2="985" y2="496"><stop stopColor="#c4229c" /><stop offset=".4" stopColor="#dc27b0" /><stop offset=".75" stopColor="#f22ac1" /><stop offset="1" stopColor="#ff2dcc" /></linearGradient>
        <linearGradient id="b2" gradientUnits="userSpaceOnUse" x1="1078" y1="478" x2="1158" y2="405"><stop stopColor="#ae1f8b" /><stop offset=".35" stopColor="#dc27b0" /><stop offset=".65" stopColor="#f02abf" /><stop offset="1" stopColor="#ff2dcc" /></linearGradient>
        <linearGradient id="b3" gradientUnits="userSpaceOnUse" x1="1207" y1="440" x2="1288" y2="452"><stop stopColor="#250a1f" /><stop offset=".14" stopColor="#4c1040" /><stop offset=".4" stopColor="#7a1762" /><stop offset="1" stopColor="#931c78" /></linearGradient>
        <linearGradient id="b4" gradientUnits="userSpaceOnUse" x1="832" y1="482" x2="930" y2="462"><stop stopColor="#1d0918" /><stop offset=".2" stopColor="#3f0e36" /><stop offset=".6" stopColor="#681453" /><stop offset="1" stopColor="#861a6d" /></linearGradient>
        <linearGradient id="b5" gradientUnits="userSpaceOnUse" x1="900" y1="595" x2="1055" y2="590"><stop stopColor="#3a0e31" /><stop offset=".3" stopColor="#4f1142" /><stop offset=".7" stopColor="#7a1863" /><stop offset="1" stopColor="#8e1b73" /></linearGradient>
        <linearGradient id="b6" gradientUnits="userSpaceOnUse" x1="1117" y1="582" x2="1142" y2="625"><stop stopColor="#1a0815" /><stop offset=".15" stopColor="#350c2d" /><stop offset=".45" stopColor="#741760" /><stop offset="1" stopColor="#c8229f" /></linearGradient>
      </defs>
      <path d="M892 586 V592.500 L1006 657.500 V651 Z" fill="#9f1d80" />
      <path d="M1006 651 L1162 628 L1161.500 634 L1006 657.500 Z" fill="#d626ad" />
      <path d="M857.500 539.500 L1116 579.500 L1075 602.500 Q1036 625 1006 651 L892 586 Q878 576 868 562 Q860 551 857.500 539.500 Z" fill="url(#b5)" />
      <path d="M1116 579.500 L1307.500 470 L1223 558 L1173 615 L1162 628 L1006 651 Q1036 625 1075 602.500 Z" fill="url(#b6)" />
      <path d="M978 280 L788 390 L857.500 539.500 L1116 579.500 L1307.500 470 L1238 320 Z" fill="#9b1e7d" />
      <path d="M981 286 L798.500 391.500 C830 417 890 460 943 501 L1085.500 479 C1046 392 1010 333 981 286 Z" fill="url(#b1)" />
      <path d="M981 286 L1230.500 324 C1226 385 1213 430 1193 528 L1182 534.500 L1085.500 479 C1046 392 1010 333 981 286 Z" fill="url(#b2)" />
      <path d="M1230.500 324 L1297 468.500 L1193 528 C1213 430 1226 385 1230.500 324 Z" fill="url(#b3)" />
      <path d="M798.500 391.500 C830 417 890 460 943 501 L924 544 L865 536 Z" fill="url(#b4)" />
      <g fill="none" stroke="#1b1b1b" strokeWidth="1.7" shapeRendering="crispEdges">
        <path d="M978 280 L788 390 L857.500 539.500 L1116 579.500 L1307.500 470 L1238 320 Z" />
        <path d="M981 286 L798.500 391.500 L865 536 L1114.500 574 L1297 468.500 L1230.500 324 Z" />
        <path d="M981 286 C1010 333 1046 392 1085.500 479" />
        <path d="M798.500 391.500 C830 417 890 460 943 501 L1085.500 479 L1182 534.500 M943 501 L924 544" />
        <path d="M1230.500 324 C1226 385 1213 430 1193 528" />
        <path d="M857.500 539.500 Q860 551 868 562 Q878 576 892 586 L1006 651 Q1036 625 1075 602.500 L1116 579.500" />
        <path d="M892 586 V592.500 L1006 657.500 L1161.500 634 L1162 628 L1006 651 V657.500" />
        <path d="M1307.500 470 L1223 558 L1173 615 Q1167 622 1161.500 634 M1162 628 L1168 621" />
      </g>
    </g>
  );
}

function NavCube() {
  return (
    <g>
      <g fill="#c6cae8">
        <path d="M1576 141 L1588.500 152 H1563.500 Z" />
        <path d="M1576 271.500 L1564 260 H1588 Z" />
        <path d="M1511 206 L1522 195 V217.500 Z" />
        <path d="M1642.500 206 L1630 195 V217.500 Z" />
        <circle cx="1636" cy="146" r="6.2" />
        <path d="M1557 147 L1559.500 154 Q1544 159 1536 167.500 L1540 170.500 L1527 175 L1528.500 159 L1531.500 162.500 Q1541 151.500 1557 147 Z" />
        <path d="M1595 147 L1593 154 Q1606 159 1616 167.500 L1612.500 170.500 L1625 175 L1623.500 159 L1620.500 162.500 Q1610 151.500 1595 147 Z" />
      </g>
      <path d="M1576 170.500 L1605 180.500 L1613 190 L1608 222 L1580 247 H1572 L1545 224 L1539 190 L1544 181.500 Z" fill="#e6e9fa" />
      <path d="M1544 181.500 L1576 199 L1608 181.500 M1539 190 L1570 209.500 H1582 L1613 190 M1576 199 L1570 209.500 V242 L1572 247 H1580 L1582 242 V209.500 Z" fill="none" stroke="#2b2b30" strokeWidth="1.1" />
      <path d="M1571 181 V179.500 M1574.500 179 V181 M1576 181 H1578 M1578.500 182.500 H1582 M1548.500 211 V216 M1551 213 V217 M1553 214 V218.500 M1555.500 216 V220 M1558 217 V221 M1560 219 V224 M1592 218 V221 M1594 217 V219.500 M1596 216 V222 M1598 215.500 V218 M1600 214 V217 M1602 211 V215" stroke="#15151a" strokeWidth="1.3" />
      <path d="M1532 194 L1539.500 227" stroke="#0a0af0" strokeWidth="2" />
      <path d="M1539.500 227 L1547 223.500" stroke="#16e016" strokeWidth="2" />
      <path d="M1547 223.500 L1568 210" stroke="#c4f2d0" strokeWidth="1" />
      <path d="M1539.500 227 L1564 249" stroke="#f00a14" strokeWidth="1.8" />
      <path d="M1599 251 L1609.500 247 L1619 251 V263 L1609 267 L1599 262.500 Z" fill="#b9bddb" />
      <path d="M1599 251 L1609 255 L1619 251 L1609.500 247 Z" fill="#d6d9f0" />
      <path d="M1609 255 V267 L1619 263 V251 Z" fill="#a6aacb" />
      <path d="M1623 254 H1635 L1629 260.500 Z" fill="#7d7c93" />
    </g>
  );
}

function Axes() {
  return (
    <g>
      <path d="M1612 828.500 V808" stroke="#1f1f86" strokeWidth="1.6" />
      <path d="M1609.500 813.500 L1612 804 L1614.500 813.500 Z" fill="#1f1f86" />
      <path d="M1612 828.500 L1623 822.500" stroke="#1f861f" strokeWidth="1.4" />
      <path d="M1628 819 L1624 825 L1620.500 822 Z" fill="#1f861f" />
      <path d="M1612 828.500 L1634 841" stroke="#8c1f1f" strokeWidth="1.6" />
      <path d="M1634 841 L1624 839 L1626.500 834.500 Z" fill="#8c1f1f" />
      <g fontFamily="Liberation Sans, sans-serif" fontSize="10" fill="#101010">
        <text x="1614.500" y="804">Z</text>
        <text x="1629" y="820.500">Y</text>
        <text x="1635.500" y="841.500">X</text>
      </g>
    </g>
  );
}

function TabClose({ color }: { color: string }) {
  return (
    <svg width="9" height="9" viewBox="0 0 9 9" className="shrink-0">
      <path d="M.8 .8 L8.2 8.2 M8.2 .8 L.8 8.2" stroke={color} strokeWidth="1.2" />
    </svg>
  );
}

function Workspace() {
  return (
    <div className="flex min-w-0 flex-1 flex-col">
      <div className="h-[732px] shrink-0 bg-linear-to-b from-[#333365] to-[#9797aa]">
        <svg width="1200" height="732" viewBox="446 133 1200 732">
          <Bowl />
          <NavCube />
          <Axes />
        </svg>
      </div>
      <div className="flex h-[21px] shrink-0 bg-[linear-gradient(to_bottom,#e3e3e3_0px,#e3e3e3_7px,#d6d6d6_7px,#d6d6d6_8px,#ececec_8px)] pl-[449px]">
        <div className="flex bg-[#ececec] px-[3px]">
          <div className="flex h-[20px] overflow-hidden rounded-[5px] bg-white text-[12.8px] leading-[20px] shadow-[0_0.5px_1.5px_rgba(0,0,0,0.35)]">
            <div className="flex w-[147px] items-center bg-linear-to-b from-[#2f94ff] to-[#0078ff] pl-[5px] text-white">
              <TabClose color="#ffffff" />
              <span className="ml-[7px] whitespace-nowrap">hexagon-bowl : 1</span>
            </div>
            <div className="flex w-[152px] items-center pl-[8px] text-[#262626]">
              <TabClose color="#555555" />
              <span className="mr-[8px] ml-[13px] flex"><SmallSheet /></span>
              Param...
            </div>
          </div>
        </div>
      </div>
    </div>
  );
}

export default function App() {
  return (
    <div className="flex h-[908px] w-[1646px] flex-col overflow-hidden bg-[#ececec] font-['Inter','Liberation_Sans',sans-serif]">
      <Defs />
      <Toolbars />
      <div className="flex h-[753px] shrink-0">
        <SidePanel />
        <Workspace />
      </div>
      <div className="flex h-[22px] shrink-0 items-start border-t border-[#9a9a9a] bg-linear-to-b from-[#ececec] to-[#d5d5d5] pt-[3px]">
        <DockButtons />
        <span className="flex-1 pt-[1px] pl-[3px] text-center text-[11.2px] leading-[15px] text-[#262626]">Report view</span>
      </div>
    </div>
  );
}
